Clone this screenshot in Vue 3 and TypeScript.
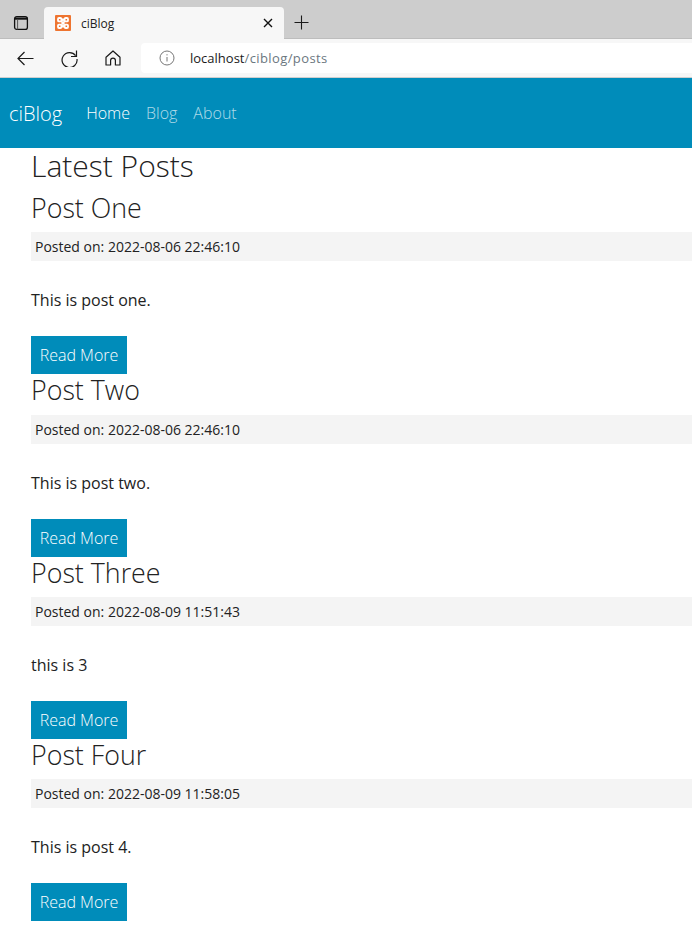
<script setup lang="ts">
const posts = [
  { title: 'Post One', date: '2022-08-06 22:46:10', body: 'This is post one.' },
  { title: 'Post Two', date: '2022-08-06 22:46:10', body: 'This is post two.' },
  { title: 'Post Three', date: '2022-08-09 11:51:43', body: 'this is 3' },
  { title: 'Post Four', date: '2022-08-09 11:58:05', body: 'This is post 4.' },
]
</script>

<template>
  <div class="tabstrip">
    <svg class="tabs-icon" width="16" height="16" viewBox="0 0 16 16" fill="none" stroke="#111" stroke-width="1.3">
      <rect x="1.6" y="1.6" width="12.8" height="12.8" rx="2.2" />
      <path d="M1.6 3.6h12.8" stroke-width="2.2" />
      <path d="M4.6 4.6v9.8" stroke-width="1" stroke="#555" />
    </svg>
    <div class="tab">
      <svg class="favicon" width="16" height="16" viewBox="0 0 16 16">
        <rect width="16" height="16" rx="1" fill="#ee7430" />
        <g fill="none" stroke="#fff" stroke-width="1.8">
          <rect x="3" y="3" width="3.4" height="3.4" rx="1" />
          <rect x="9.6" y="3" width="3.4" height="3.4" rx="1" />
          <rect x="3" y="9.6" width="3.4" height="3.4" rx="1" />
          <rect x="9.6" y="9.6" width="3.4" height="3.4" rx="1" />
          <path d="M6.4 3.6L8 5.4l1.6-1.8M6.4 12.4L8 10.6l1.6 1.8" />
          <path d="M6.4 6.4l3.2 3.2M9.6 6.4l-3.2 3.2" />
        </g>
      </svg>
      <span class="tab-title">ciBlog</span>
      <svg class="tab-close" width="10" height="10" viewBox="0 0 10 10" stroke="#111" stroke-width="1.4">
        <path d="M1 1l8 8M9 1l-8 8" />
      </svg>
    </div>
    <svg class="new-tab" width="15" height="15" viewBox="0 0 15 15" stroke="#1a1a1a" stroke-width="1.1">
      <path d="M7.5 0.5v14M0.5 7.5h14" />
    </svg>
  </div>
  <div class="toolbar">
    <svg class="tool back" width="17" height="15" viewBox="0 0 17 15" fill="none" stroke="#1a1a1a" stroke-width="1.2">
      <path d="M16.5 7.5H1M7.5 1L1 7.5 7.5 14" />
    </svg>
    <svg class="tool reload" width="17" height="17" viewBox="0 0 17 17" fill="none" stroke="#1a1a1a" stroke-width="1.2">
      <path d="M14.6 5.6A7.5 7.5 0 1 0 16 9" />
      <path d="M15.5 0.5v6h-5.5" />
    </svg>
    <svg class="tool home" width="16" height="16" viewBox="0 0 16 16" fill="none" stroke="#1a1a1a" stroke-width="1.2">
      <path d="M1 7.2L8 1l7 6.2V15h-4.6v-4.4a2.4 2.4 0 0 0-4.8 0V15H1z" stroke-linejoin="round" />
    </svg>
    <div class="address">
      <svg class="info" width="16" height="16" viewBox="0 0 16 16" fill="none" stroke="#777" stroke-width="1">
        <circle cx="8" cy="8" r="7" />
        <path d="M8 7v4.5M8 4.2v1.2" />
      </svg>
      <span class="url"><span class="host">localhost</span>/ciblog/posts</span>
    </div>
  </div>

  <nav class="navbar">
    <a class="brand">ciBlog</a>
    <a class="nav-link active">Home</a>
    <a class="nav-link">Blog</a>
    <a class="nav-link">About</a>
  </nav>

  <div class="container">
    <h2 class="page-title">Latest Posts</h2>
    <div v-for="post in posts" :key="post.title" class="post">
      <h3>{{ post.title }}</h3>
      <small class="post-date">Posted on: {{ post.date }}</small>
      <p>{{ post.body }}</p>
      <a class="btn">Read More</a>
    </div>
  </div>
</template>

<style>
html, body {
  overflow: hidden;
  background: #fff;
}
</style>

<style scoped>
.tabstrip {
  height: 39px;
  background: #cdcdcd;
  display: flex;
  align-items: flex-end;
  box-sizing: border-box;
  border-bottom: 1px solid #bdbdbd;
}
.tabs-icon {
  margin: 0 15px 7px 13px;
}
.tab {
  width: 240px;
  height: 32px;
  margin-bottom: -1px;
  background: #f7f7f7;
  border-radius: 4px 4px 0 0;
  display: flex;
  align-items: center;
  padding: 0 11px;
  box-sizing: border-box;
}
.favicon {
  margin-right: 10px;
}
.tab-title {
  flex: 1;
  font: 12px "Open Sans", sans-serif;
  color: #222;
}
.new-tab {
  margin: 0 0 8px 10px;
}
.toolbar {
  height: 39px;
  background: #f7f7f7;
  display: flex;
  align-items: center;
  border-bottom: 1px solid #cfcfcf;
  box-sizing: border-box;
}
.tool {
  flex: none;
}
.back {
  margin-left: 17px;
}
.reload {
  margin-left: 27px;
}
.home {
  margin-left: 27px;
}
.address {
  margin-left: 20px;
  flex: 1;
  height: 30px;
  background: #fff;
  border-radius: 4px 0 0 4px;
  display: flex;
  align-items: center;
  padding-left: 18px;
}
.info {
  margin-right: 15px;
}
.url {
  font: 13px "Open Sans", sans-serif;
  letter-spacing: 0.4px;
  color: #6b7780;
}
.host {
  color: #1a1a1a;
  letter-spacing: 0;
}
.navbar {
  height: 70px;
  background: #008cba;
  display: flex;
  align-items: center;
  padding-left: 9px;
  font-family: "Open Sans", sans-serif;
  font-weight: 300;
}
.brand {
  font-size: 20px;
  color: #fff;
  margin-right: 24px;
}
.nav-link {
  font-size: 16px;
  color: rgba(255, 255, 255, 0.7);
  margin-right: 16px;
}
.nav-link.active {
  color: #fff;
}
.container {
  padding-left: 31px;
  font-family: "Open Sans", sans-serif;
  font-size: 16px;
  color: #222;
}
.page-title {
  margin: 0;
  font-size: 30px;
  font-weight: 300;
  line-height: 36px;
}
h3 {
  margin: 0;
  padding-bottom: 2px;
  font-size: 26.8px;
  font-weight: 300;
  line-height: 31.33px;
}
.post:first-of-type h3 {
  margin-top: 7.97px;
}
.post-date {
  display: block;
  margin-top: 7px;
  height: 29px;
  line-height: 29px;
  padding-left: 4px;
  background: #f4f4f4;
  font-size: 14px;
}
p {
  margin: 27px 0 0;
  line-height: 24px;
}
.btn {
  display: block;
  width: 96px;
  box-sizing: border-box;
  margin-top: 24px;
  text-align: center;
  height: 38px;
  line-height: 38px;
  background: #008cba;
  color: #fff;
  font-size: 16px;
  font-weight: 300;
}
</style>
